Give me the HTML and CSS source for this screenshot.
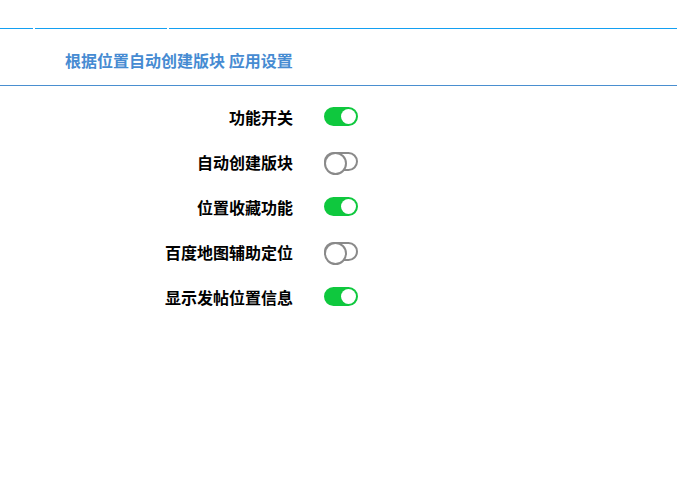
FILE: index.html
```html
<!DOCTYPE html>
<html lang="zh-CN">
<head>
    <meta charset="UTF-8">
    <meta name="viewport" content="width=device-width, initial-scale=1.0">
    <title>应用设置</title>
    <link rel="stylesheet" href="styles.css">
</head>
<body>
    <div class="tabs">
        <div class="tab tab-first"></div>
        <div class="tab tab-second"></div>
        <div class="tab tab-rest"></div>
    </div>

    <div class="title">根据位置自动创建版块 应用设置</div>

    <div class="settings">
        <div class="row">
            <label class="label">功能开关</label>
            <span class="switch on"></span>
        </div>
        <div class="row">
            <label class="label">自动创建版块</label>
            <span class="switch"></span>
        </div>
        <div class="row">
            <label class="label">位置收藏功能</label>
            <span class="switch on"></span>
        </div>
        <div class="row">
            <label class="label">百度地图辅助定位</label>
            <span class="switch"></span>
        </div>
        <div class="row">
            <label class="label">显示发帖位置信息</label>
            <span class="switch on"></span>
        </div>
    </div>
</body>
</html>
```

FILE: styles.css
```css
* {
    margin: 0;
    padding: 0;
    box-sizing: border-box;
}

body, html {
    height: 100%;
    font-family: "Noto Sans CJK SC", "Noto Sans", sans-serif;
    background-color: white;
}

.tabs {
    display: flex;
    gap: 2px;
    height: 29px;
}

.tab {
    border-bottom: 1px solid #13a0f2;
}

.tab-first {
    width: 33px;
}

.tab-second {
    width: 132px;
}

.tab-rest {
    flex: 1;
}

.title {
    padding: 19px 65px 13px;
    line-height: 24px;
    font-size: 16px;
    font-weight: bold;
    color: #468bd2;
    border-bottom: 1px solid #4a8fd0;
}

.settings {
    padding-top: 8px;
}

.row {
    display: flex;
    align-items: center;
    height: 45px;
}

.label {
    width: 293px;
    text-align: right;
    font-size: 16px;
    font-weight: bold;
    color: black;
    margin-right: 31px;
}

.switch {
    position: relative;
    width: 34px;
    height: 19px;
    border-radius: 10px;
    border: 2px solid #8a8a8a;
    background-color: white;
}

.switch::after {
    content: "";
    position: absolute;
    top: -2px;
    left: -2px;
    width: 19px;
    height: 19px;
    border-radius: 50%;
    border: 2px solid #8a8a8a;
    background-color: white;
}

.switch.on {
    border-color: #0fc83e;
    background-color: #0fc83e;
}

.switch.on::after {
    top: 0;
    left: auto;
    right: 0;
    width: 15px;
    height: 15px;
    border: none;
}
```
